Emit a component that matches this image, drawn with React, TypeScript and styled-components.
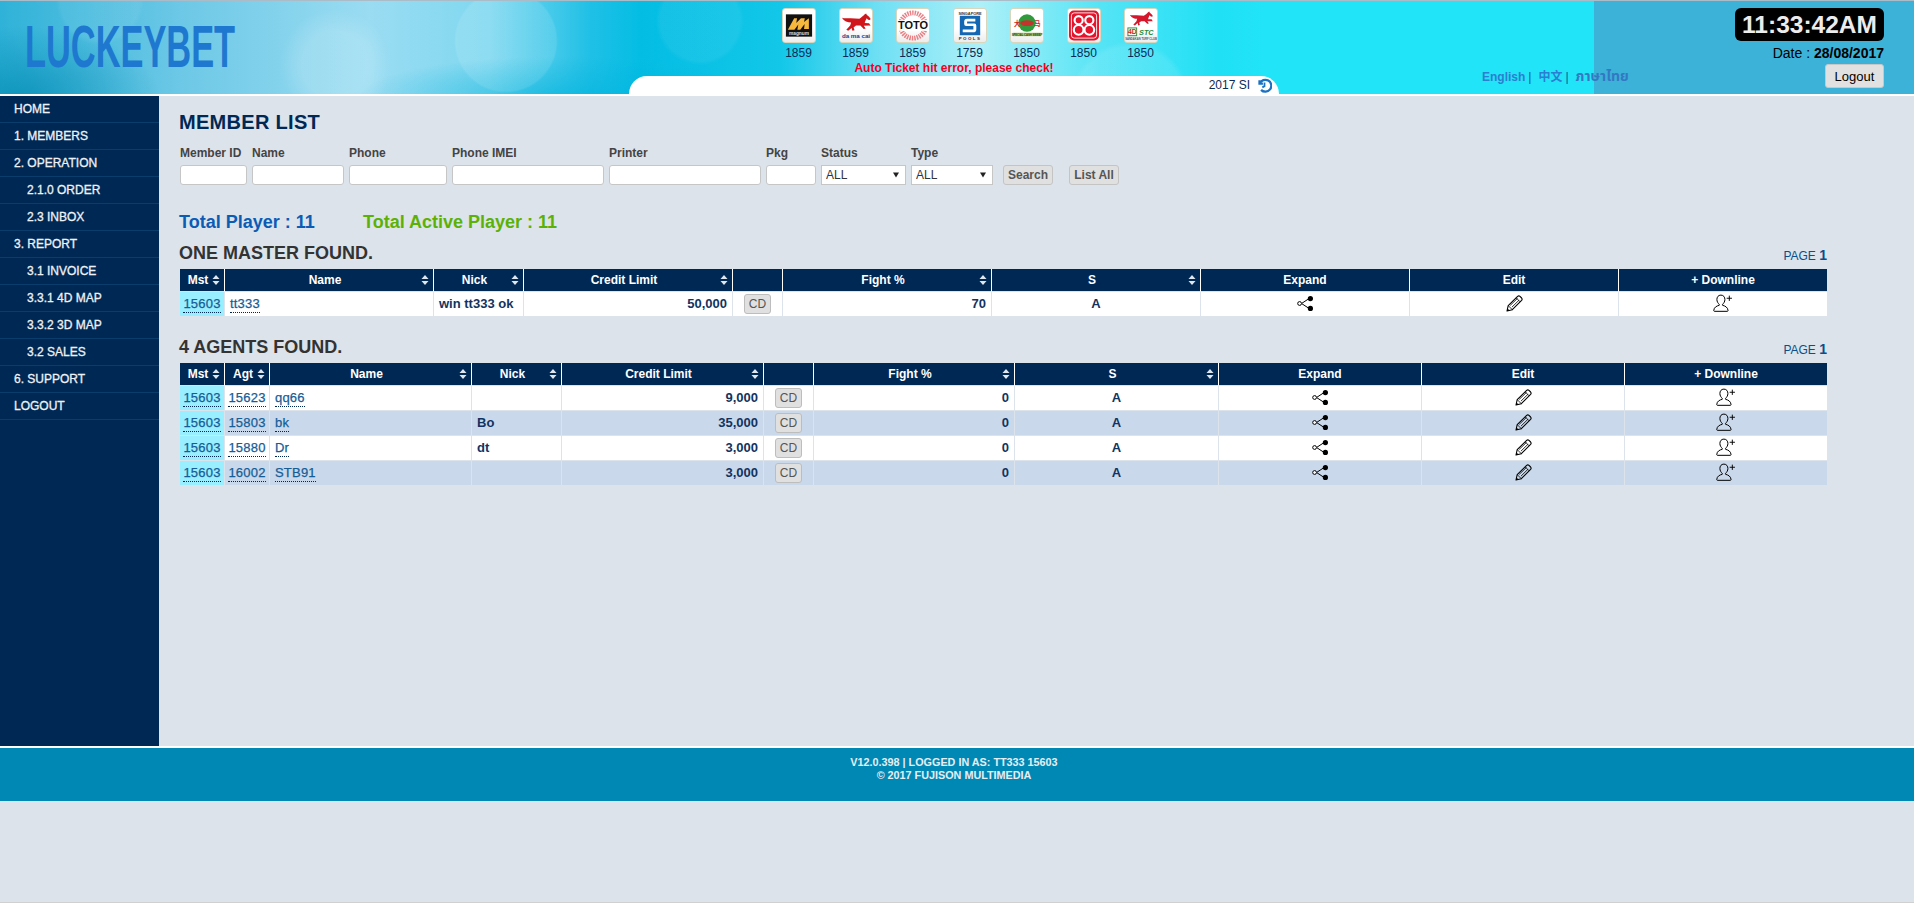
import React from "react";
import styled, { createGlobalStyle } from "styled-components";

const GlobalStyle = createGlobalStyle`
  html, body { margin: 0; padding: 0; background: #dce3eb; }
  body { font-family: "Liberation Sans", Arial, "Noto Sans CJK SC", sans-serif; }
  * { box-sizing: border-box; }
`;

const Page = styled.div`
  height: 903px;
  overflow: hidden;
  background: #dce3eb;
  border-bottom: 1px solid #d0d0d0;
`;

const Header = styled.header`
  display: flex;
  height: 96px;
  border-top: 1px solid #a9bcc8;
  border-bottom: 2px solid #fff;
  background:
    linear-gradient(to right, transparent 1594px, #3cb2d8 1594px),
    linear-gradient(to right, transparent 1264px, #22e4f8 1264px),
    radial-gradient(circle 52px at 506px 40px, rgba(255, 255, 255, 0.11) 96%, transparent 100%),
    radial-gradient(circle 56px at 335px 64px, rgba(255, 255, 255, 0.16) 60%, transparent 100%),
    radial-gradient(circle 44px at 100px 0px, rgba(255, 255, 255, 0.06) 90%, transparent 100%),
    radial-gradient(circle 60px at 1130px 100px, rgba(255, 255, 255, 0.1) 90%, transparent 100%),
    radial-gradient(circle 44px at 700px 20px, rgba(255, 255, 255, 0.06) 90%, transparent 100%),
    radial-gradient(ellipse 140px 70px at 20px 95px, rgba(4, 140, 180, 0.75) 0%, transparent 100%),
    radial-gradient(ellipse 200px 40px at 560px 95px, rgba(0, 178, 220, 0.6) 0%, transparent 100%),
    linear-gradient(to right, #2fb2d8 0, #6cc8e6 180px, #9adcf2 370px, #7fd8f0 490px, #20c0e6 590px, #04bde3 640px, #12c7e8 780px, #70e0f4 880px, #aef0f8 980px, #55e4f5 1100px, #1fe0f5 1220px, #22e4f8 1264px);
`;

const LogoCell = styled.div`
  width: 629px;
  flex: none;
  padding: 24px 0 0 25px;
`;

const LogoMark = styled.div`
  display: inline-block;
  font-size: 60px;
  line-height: 44px;
  font-weight: 700;
  color: #1f78cf;
  transform: scaleX(0.573);
  transform-origin: left center;
`;

const CenterCell = styled.div`
  width: 650px;
  flex: none;
  display: flex;
  flex-direction: column;
  padding-top: 7px;
`;

const LotteryRow = styled.div`
  display: flex;
  gap: 23px;
  padding-left: 152.5px;
`;

const Lottery = styled.div`
  width: 34px;
  display: flex;
  flex-direction: column;
  align-items: center;
`;

const LotteryTile = styled.div`
  width: 34px;
  height: 35px;
  flex: none;
  border: 1px solid #d9d6bd;
  border-radius: 3px;
  background: linear-gradient(#fff 60%, #ececec);
  display: flex;
  align-items: center;
  justify-content: center;
  overflow: hidden;
`;

const LotteryDraw = styled.div`
  margin-top: 3px;
  font-size: 12px;
  line-height: 14px;
  color: #0b2b57;
`;

const ErrorNote = styled.div`
  height: 13px;
  margin-top: 2px;
  text-align: center;
  font-size: 12px;
  line-height: 13px;
  font-weight: 700;
  color: #f5001e;
`;

const SeasonTab = styled.div`
  height: 18px;
  margin-top: 1px;
  background: #fff;
  border-radius: 18px 18px 0 0;
  display: flex;
  align-items: center;
  justify-content: flex-end;
  gap: 7px;
  padding-right: 7px;
  font-size: 12px;
  color: #0b2b57;
`;

const RightCell = styled.div`
  flex: 1;
  display: flex;
  justify-content: space-between;
  padding: 7px 30px 0 203px;
`;

const LangBar = styled.div`
  align-self: flex-end;
  margin-bottom: 9px;
  font-size: 12px;
  line-height: 16px;
  font-weight: 700;
  color: #2a7fd0;
  white-space: nowrap;
`;

const LangSep = styled.span`
  color: #0a55a0;
  font-weight: 400;
  margin: 0 7px 0 3px;
`;

const LangCjk = styled.span`
  font-family: "Noto Sans CJK SC", sans-serif;
  font-size: 12px;
`;

const LangThai = styled.span`
  font-family: "Noto Sans Thai", "Noto Sans", "DejaVu Sans", sans-serif;
  font-size: 14px;
  font-weight: 700;
  color: #3378c2;
`;

const ClockCol = styled.div`
  width: 149px;
  display: flex;
  flex-direction: column;
  align-items: flex-end;
`;

const Clock = styled.div`
  width: 149px;
  height: 33px;
  border-radius: 6px;
  background: #000;
  color: #ececec;
  font-size: 24.5px;
  font-weight: 700;
  line-height: 33px;
  text-align: center;
`;

const DateLine = styled.div`
  margin-top: 4px;
  font-size: 14px;
  line-height: 16px;
  color: #000;
  white-space: nowrap;
  b { font-weight: 700; }
`;

const LogoutButton = styled.button`
  margin-top: 3px;
  width: 59px;
  height: 24px;
  padding: 0;
  border: 1px solid #c8c8c8;
  border-radius: 3px;
  background: #e1e1e1;
  font: 13px "Liberation Sans", Arial, sans-serif;
  color: #000;
`;

const Body = styled.div`
  display: flex;
`;

const Sidebar = styled.nav`
  width: 159px;
  height: 650px;
  flex: none;
  background: #002855;
`;

const MenuItem = styled.div<{ $sub?: boolean }>`
  height: 27px;
  padding-left: ${(p) => (p.$sub ? 27 : 14)}px;
  border-bottom: 1px solid #0a3c6c;
  font-size: 12px;
  line-height: 26px;
  font-weight: 400;
  -webkit-text-stroke: 0.3px #eef2f6;
  color: #eef2f6;
`;

const Main = styled.main`
  flex: 1;
  padding: 14px 0 0 21px;
`;

const Content = styled.div`
  width: 1647px;
`;

const PageTitle = styled.h1`
  margin: 0 0 0 -1px;
  font-size: 20px;
  line-height: 24px;
  font-weight: 700;
  letter-spacing: 0.3px;
  color: #002855;
`;

const FilterBar = styled.form`
  display: flex;
  align-items: flex-end;
  gap: 5px;
  margin-top: 12px;
`;

const Field = styled.label<{ $w: number }>`
  width: ${(p) => p.$w}px;
  display: flex;
  flex-direction: column;
  gap: 5px;
  font-size: 12px;
  line-height: 14px;
  font-weight: 700;
  color: #444;
  white-space: nowrap;
`;

const TextInput = styled.input`
  width: 100%;
  height: 20px;
  background: #fff;
  border: 1px solid #c6c6c6;
  border-radius: 3px;
  padding: 0 4px;
`;

const SelectWrap = styled.div`
  position: relative;
  height: 20px;
`;

const Select = styled.select`
  appearance: none;
  display: block;
  width: 100%;
  height: 20px;
  background: #fff;
  border: 1px solid #c6c6c6;
  border-radius: 0;
  padding: 0 0 0 4px;
  font: 12px "Liberation Sans", Arial, sans-serif;
  color: #333;
`;

const SelectArrow = styled.svg`
  position: absolute;
  right: 7px;
  top: 7px;
  pointer-events: none;
`;

const FormButton = styled.button<{ $ml: number }>`
  width: 50px;
  height: 20px;
  margin-left: ${(p) => p.$ml}px;
  padding: 0;
  background: #e0e0e0;
  border: 1px solid #c4c4c4;
  border-radius: 3px;
  font: 700 12px "Liberation Sans", Arial, sans-serif;
  color: #555;
`;

const Totals = styled.div`
  display: flex;
  margin: 26px 0 0 -1px;
  font-size: 18px;
  line-height: 22px;
  font-weight: 700;
`;

const TotalPlayer = styled.div`
  width: 184px;
  color: #0b5cb5;
`;

const TotalActive = styled.div`
  color: #5cb106;
`;

const SectionHead = styled.div<{ $mt: number }>`
  display: flex;
  justify-content: space-between;
  align-items: center;
  height: 18px;
  margin-top: ${(p) => p.$mt}px;
  margin-bottom: 7px;
`;

const SectionTitle = styled.h2`
  margin: 0 0 0 -1px;
  font-size: 18px;
  line-height: 18px;
  font-weight: 700;
  color: #333;
`;

const Pager = styled.div`
  font-size: 12px;
  color: #0a4f8a;
  padding-top: 4px;
  b { font-size: 14px; }
`;

const Table = styled.table`
  width: 1647px;
  table-layout: fixed;
  border-collapse: separate;
  border-spacing: 0;
`;

const Col = styled.col<{ $w: number }>`
  width: ${(p) => p.$w}px;
`;

const HeadCell = styled.th`
  height: 23px;
  padding: 0 4px;
  background: #002855;
  border-right: 1px solid #fff;
  border-bottom: 1px solid #dce3eb;
  font-size: 12px;
  font-weight: 700;
  color: #fff;
  &:last-child { border-right: 0; }
`;

const HeadInner = styled.div`
  display: flex;
  align-items: center;
`;

const HeadLabel = styled.span`
  flex: 1;
  text-align: center;
  white-space: nowrap;
`;

const Row = styled.tr<{ $alt?: boolean }>`
  background: ${(p) => (p.$alt ? "#c9d8ea" : "#fff")};
`;

const Cell = styled.td<{ $align?: string; $master?: boolean }>`
  height: 25px;
  padding: 0 5px 2px;
  border-right: 1px solid #dce3eb;
  border-bottom: 1px solid #dce3eb;
  text-align: ${(p) => p.$align || "left"};
  background: ${(p) => (p.$master ? "#99eeff" : "transparent")};
  font-size: 13px;
  font-weight: 700;
  color: #12335f;
  white-space: nowrap;
  &:last-child { border-right: 0; }
`;

const IdCell = styled(Cell)`
  padding: 0 0 2px;
  text-align: center;
`;

const ButtonCell = styled(Cell)`
  padding: 0;
`;

const MemberLink = styled.a`
  color: #155d96;
  font-weight: 400;
  letter-spacing: 0.2px;
  -webkit-text-stroke: 0.25px #155d96;
  border-bottom: 1px dotted #002855;
  padding-bottom: 1px;
`;

const CdButton = styled.button`
  display: block;
  margin: 0 auto;
  width: 27px;
  height: 20px;
  padding: 0;
  background: #e0e0e0;
  border: 1px solid #bdbdbd;
  border-radius: 3px;
  font: 12px "Liberation Sans", Arial, sans-serif;
  color: #555;
`;

const IconWrap = styled.div`
  display: flex;
  justify-content: center;
  align-items: center;
`;

const Footer = styled.footer`
  height: 55px;
  padding: 8px 6px 0 0;
  border-top: 2px solid #fff;
  background: #0088b5;
  text-align: center;
  font-size: 10.8px;
  line-height: 12.5px;
  font-weight: 700;
  color: #e6eef2;
`;

const SortIcon = () => (
  <svg width="8" height="12" viewBox="0 0 8 12" aria-hidden="true">
    <path d="M4 1 7.5 5H.5z" fill="#dfe6ee" />
    <path d="M4 11 .5 7h7z" fill="#dfe6ee" />
  </svg>
);

const ShareIcon = () => (
  <svg width="17" height="15" viewBox="0 0 17 15" aria-hidden="true">
    <path d="M5 7.2 12 2.6M5 7.8l7 4.6" stroke="#000" strokeWidth="1" fill="none" />
    <circle cx="2.6" cy="7.5" r="1.9" fill="#fff" stroke="#000" strokeWidth="1" />
    <circle cx="13.4" cy="2.6" r="2.6" fill="#000" />
    <circle cx="13.4" cy="12.4" r="2.6" fill="#000" />
  </svg>
);

const PencilIcon = () => (
  <svg width="17" height="17" viewBox="0 0 17 17" aria-hidden="true">
    <path
      d="M1 16 2.2 10.6 11.6 1.4Q12.8.4 14 1.4L15.6 3Q16.6 4.2 15.6 5.4L6.3 14.7Z"
      fill="none"
      stroke="#000"
      strokeWidth="1.1"
      strokeLinejoin="round"
    />
    <path d="M2.2 10.6 6.3 14.7M10.2 2.9l3.9 3.9M4.2 10.4 11.5 3.4M5.9 12.2l7.2-7.1" stroke="#000" strokeWidth=".8" fill="none" />
    <path d="M1 16 1.5 13.4 3.6 15.5Z" fill="#000" />
  </svg>
);

const UserPlusIcon = () => (
  <svg width="20" height="18" viewBox="0 0 19 17" aria-hidden="true">
    <path
      d="M7.5 1C4.900 1 3.700 3 3.700 5.200c0 2 1.100 3.600 2.200 4.500v1C3.600 11.300 1 12.400.7 15.600c0 .4.200.8.600.8h12.400c.4 0 .6-.4.600-.8-.3-3.200-2.900-4.300-5.200-4.900v-1c1.100-.9 2.200-2.500 2.200-4.500C11.300 3 10.100 1 7.500 1Z"
      fill="none"
      stroke="#000"
      strokeWidth=".95"
    />
    <path d="M15.500 1.500v5M13 4h5" stroke="#000" strokeWidth=".9" fill="none" />
  </svg>
);

const HistoryIcon = () => (
  <svg width="15" height="15" viewBox="0 0 24 24" fill="none" stroke="#1a72c4" strokeWidth="3.6" aria-hidden="true">
    <path d="M4 3.500V9h5.500" />
    <path d="M4.500 9A9.500 9.500 0 1 1 6.500 19" />
    <path d="M12 7v6l-3.500 2" strokeWidth="2.800" />
  </svg>
);

const Horse = ({ fill, s = 1, x = 0, y = 0 }: { fill: string; s?: number; x?: number; y?: number }) => (
  <path
    transform={`translate(${x} ${y}) scale(${s})`}
    fill={fill}
    d="M0 4.500C3 5.500 6 4.800 9 5L18 5.500C20 4.500 22 2.500 23.500 1L25 0 25.500 1.500 28 3.500 29.500 5.500 29 6.800 27 6.500 25.500 5 24 8 23.500 10 28 10.200 29.500 12.800 27.800 12.500 22.500 12.800 24.500 15.500 22.500 16 19 12.500 14.500 12.500 12 14.500 13 17.500 10.800 18 10 15 6.500 18 4.500 17 8.500 12.500 9.500 9.500C6 9.500 2 8 0 4.500Z"
  />
);

const logos = [
  <svg key="m" width="32" height="33" viewBox="0 0 33 33">
    <rect x="3" y="5" width="27" height="23" fill="#111" />
    <path d="M5 21 11.500 9h3l-.8 5 4.800-5h4l-.8 4 5-4V20h-5l.6-5-4.500 6h-3l1-5.500-4 5.500Z" fill="#f6b73c" />
    <text x="16.500" y="26.500" fontSize="5" textAnchor="middle" fill="#ddd" fontFamily="Liberation Sans" fontWeight="700">magnum</text>
  </svg>,
  <svg key="d" width="32" height="33" viewBox="0 0 33 33">
    <Horse fill="#d0161b" s={1} x={2} y={4} />
    <text x="16.500" y="29" fontSize="6.400" textAnchor="middle" fill="#1d3e86" fontFamily="Liberation Sans" fontWeight="700">da ma cai</text>
  </svg>,
  <svg key="t" width="32" height="33" viewBox="0 0 33 33">
    <circle cx="16.500" cy="16.500" r="13" fill="none" stroke="#ea7f84" strokeWidth="5" strokeDasharray="1.500 1" />
    <rect x="0" y="11" width="33" height="11" fill="#fff" />
    <text x="16.500" y="20.500" fontSize="11" textAnchor="middle" fill="#111" fontFamily="Liberation Sans" fontWeight="700" textLength="31" lengthAdjust="spacingAndGlyphs">TOTO</text>
  </svg>,
  <svg key="s" width="32" height="33" viewBox="0 0 33 33">
    <text x="16.500" y="5.500" fontSize="4" textAnchor="middle" fill="#333" fontFamily="Liberation Sans" fontWeight="700">SINGAPORE</text>
    <rect x="6" y="6.500" width="21" height="20" fill="#1467b3" />
    <path d="M22 9.500H13.500Q10.500 9.500 10.500 12.500V15Q10.500 17 12.500 17H20V20.500H9V23.500H19.500Q23 23.500 23 20.500V16.500Q23 14.500 21 14.500H13.500V12.500H22Z" fill="#fff" />
    <text x="16.500" y="31.500" fontSize="4.500" textAnchor="middle" fill="#333" fontFamily="Liberation Sans" fontWeight="700" letterSpacing="1.500">POOLS</text>
  </svg>,
  <svg key="c" width="32" height="33" viewBox="0 0 33 33">
    <circle cx="16.500" cy="14" r="9" fill="#2f9b3c" />
    <ellipse cx="16.500" cy="14" rx="7" ry="3" fill="#c4342c" />
    <text x="3" y="17" fontSize="6.500" fill="#c9261f" fontFamily="Noto Sans CJK SC" fontWeight="700">大</text>
    <text x="24" y="17" fontSize="6.500" fill="#c9261f" fontFamily="Noto Sans CJK SC" fontWeight="700">马</text>
    <rect x="2" y="24" width="29" height="3.500" fill="#a6c86c" />
    <text x="16.500" y="27" fontSize="2.800" textAnchor="middle" fill="#174a14" fontFamily="Liberation Sans" fontWeight="700">SPECIAL CASH SWEEP</text>
  </svg>,
  <svg key="8" width="32" height="33" viewBox="0 0 33 33">
    <rect x="1" y="1" width="31" height="31" rx="5" fill="#e3142b" />
    <rect x="3.500" y="3.500" width="26" height="26" rx="3" fill="none" stroke="#fff" strokeWidth=".9" />
    <g fill="none" stroke="#fff" strokeWidth="2.200">
      <circle cx="11" cy="11" r="4.200" />
      <circle cx="11" cy="21" r="5" />
      <circle cx="22" cy="11" r="4.200" />
      <circle cx="22" cy="21" r="5" />
    </g>
  </svg>,
  <svg key="7" width="32" height="33" viewBox="0 0 33 33">
    <Horse fill="#d4172a" s={0.8} x={5} y={2} />
    <rect x="3" y="19" width="9" height="8" fill="none" stroke="#2f8f3c" strokeWidth="1" />
    <text x="7.500" y="25.500" fontSize="7" textAnchor="middle" fill="#c9261f" fontFamily="Liberation Sans" fontWeight="700">4D</text>
    <text x="22" y="26" fontSize="7.500" textAnchor="middle" fill="#1f8a3a" fontFamily="Liberation Sans" fontWeight="700" fontStyle="italic">STC</text>
    <text x="16.500" y="31" fontSize="2.800" textAnchor="middle" fill="#555" fontFamily="Liberation Sans" fontWeight="700">SANDAKAN TURF CLUB</text>
  </svg>,
];

const draws = ["1859", "1859", "1859", "1759", "1850", "1850", "1850"];

const menu: [string, boolean][] = [
  ["HOME", false],
  ["1. MEMBERS", false],
  ["2. OPERATION", false],
  ["2.1.0 ORDER", true],
  ["2.3 INBOX", true],
  ["3. REPORT", false],
  ["3.1 INVOICE", true],
  ["3.3.1 4D MAP", true],
  ["3.3.2 3D MAP", true],
  ["3.2 SALES", true],
  ["6. SUPPORT", false],
  ["LOGOUT", false],
];

const masterCols = [45, 209, 90, 209, 50, 209, 209, 209, 209, 208];
const agentCols = [45, 45, 202, 90, 202, 50, 201, 204, 203, 203, 202];

type Head = [string, boolean];
const tailHeads: Head[] = [
  ["Name", true],
  ["Nick", true],
  ["Credit Limit", true],
  ["", false],
  ["Fight %", true],
  ["S", true],
  ["Expand", false],
  ["Edit", false],
  ["+ Downline", false],
];

const HeadRow = ({ heads }: { heads: Head[] }) => (
  <tr>
    {heads.map(([label, sort], i) => (
      <HeadCell key={i}>
        <HeadInner>
          <HeadLabel>{label}</HeadLabel>
          {sort && <SortIcon />}
        </HeadInner>
      </HeadCell>
    ))}
  </tr>
);

const TailCells = ({ limit, fight }: { limit: string; fight: string }) => (
  <>
    <Cell $align="right">{limit}</Cell>
    <ButtonCell>
      <CdButton type="button">CD</CdButton>
    </ButtonCell>
    <Cell $align="right">{fight}</Cell>
    <Cell $align="center">A</Cell>
    <Cell>
      <IconWrap><ShareIcon /></IconWrap>
    </Cell>
    <Cell>
      <IconWrap><PencilIcon /></IconWrap>
    </Cell>
    <Cell>
      <IconWrap><UserPlusIcon /></IconWrap>
    </Cell>
  </>
);

const agents = [
  { id: "15623", name: "qq66", nick: "", limit: "9,000" },
  { id: "15803", name: "bk", nick: "Bo", limit: "35,000" },
  { id: "15880", name: "Dr", nick: "dt", limit: "3,000" },
  { id: "16002", name: "STB91", nick: "", limit: "3,000" },
];

const filters: [string, number][] = [
  ["Member ID", 67],
  ["Name", 92],
  ["Phone", 98],
  ["Phone IMEI", 152],
  ["Printer", 152],
  ["Pkg", 50],
];

const DropdownField = ({ label, w }: { label: string; w: number }) => (
  <Field $w={w}>
    {label}
    <SelectWrap>
      <Select defaultValue="ALL">
        <option>ALL</option>
      </Select>
      <SelectArrow width="6" height="6" viewBox="0 0 6 6" aria-hidden="true">
        <path d="M0 .5h6L3 5.500z" fill="#222" />
      </SelectArrow>
    </SelectWrap>
  </Field>
);

export default function App() {
  return (
    <Page>
      <GlobalStyle />
      <Header>
        <LogoCell>
          <LogoMark>LUCKEYBET</LogoMark>
        </LogoCell>
        <CenterCell>
          <LotteryRow>
            {logos.map((logo, i) => (
              <Lottery key={i}>
                <LotteryTile>{logo}</LotteryTile>
                <LotteryDraw>{draws[i]}</LotteryDraw>
              </Lottery>
            ))}
          </LotteryRow>
          <ErrorNote>Auto Ticket hit error, please check!</ErrorNote>
          <SeasonTab>
            2017 SI
            <HistoryIcon />
          </SeasonTab>
        </CenterCell>
        <RightCell>
          <LangBar>
            English<LangSep>|</LangSep>
            <LangCjk>中文</LangCjk>
            <LangSep>|</LangSep>
            <LangThai>ภาษาไทย</LangThai>
          </LangBar>
          <ClockCol>
            <Clock>11:33:42AM</Clock>
            <DateLine>
              Date : <b>28/08/2017</b>
            </DateLine>
            <LogoutButton type="button">Logout</LogoutButton>
          </ClockCol>
        </RightCell>
      </Header>
      <Body>
        <Sidebar>
          {menu.map(([label, sub]) => (
            <MenuItem key={label} $sub={sub}>
              {label}
            </MenuItem>
          ))}
        </Sidebar>
        <Main>
          <Content>
            <PageTitle>MEMBER LIST</PageTitle>
            <FilterBar>
              {filters.map(([label, w]) => (
                <Field key={label} $w={w}>
                  {label}
                  <TextInput />
                </Field>
              ))}
              <DropdownField label="Status" w={85} />
              <DropdownField label="Type" w={82} />
              <FormButton type="button" $ml={5}>Search</FormButton>
              <FormButton type="button" $ml={11}>List All</FormButton>
            </FilterBar>
            <Totals>
              <TotalPlayer>Total Player : 11</TotalPlayer>
              <TotalActive>Total Active Player : 11</TotalActive>
            </Totals>

            <SectionHead $mt={11}>
              <SectionTitle>ONE MASTER FOUND.</SectionTitle>
              <Pager>PAGE <b>1</b></Pager>
            </SectionHead>
            <Table>
              <colgroup>
                {masterCols.map((w, i) => <Col key={i} $w={w} />)}
              </colgroup>
              <thead>
                <HeadRow heads={[["Mst", true], ...tailHeads]} />
              </thead>
              <tbody>
                <Row>
                  <IdCell $master><MemberLink>15603</MemberLink></IdCell>
                  <Cell><MemberLink>tt333</MemberLink></Cell>
                  <Cell>win tt333 ok</Cell>
                  <TailCells limit="50,000" fight="70" />
                </Row>
              </tbody>
            </Table>

            <SectionHead $mt={21}>
              <SectionTitle>4 AGENTS FOUND.</SectionTitle>
              <Pager>PAGE <b>1</b></Pager>
            </SectionHead>
            <Table>
              <colgroup>
                {agentCols.map((w, i) => <Col key={i} $w={w} />)}
              </colgroup>
              <thead>
                <HeadRow heads={[["Mst", true], ["Agt", true], ...tailHeads]} />
              </thead>
              <tbody>
                {agents.map((a, i) => (
                  <Row key={a.id} $alt={i % 2 === 1}>
                    <IdCell $master><MemberLink>15603</MemberLink></IdCell>
                    <IdCell><MemberLink>{a.id}</MemberLink></IdCell>
                    <Cell><MemberLink>{a.name}</MemberLink></Cell>
                    <Cell>{a.nick}</Cell>
                    <TailCells limit={a.limit} fight="0" />
                  </Row>
                ))}
              </tbody>
            </Table>
          </Content>
        </Main>
      </Body>
      <Footer>
        V12.0.398 | LOGGED IN AS: TT333 15603
        <br />
        © 2017 FUJISON MULTIMEDIA
      </Footer>
    </Page>
  );
}
